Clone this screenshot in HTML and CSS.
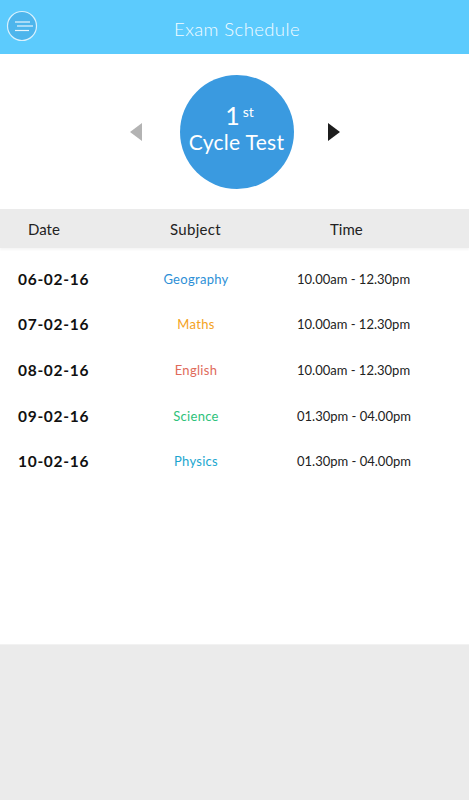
FILE: index.html
```html
<!DOCTYPE html>
<html lang="en">
<head>
  <meta charset="UTF-8" />
  <meta name="viewport" content="width=device-width, initial-scale=1.0" />
  <title>Exam Schedule</title>
  <link rel="stylesheet" href="styles.css">
</head>
<body>
  <header class="topbar">
    <button class="menu-btn" aria-label="Menu">
      <svg width="32" height="32" viewBox="0 0 32 32">
        <circle cx="16" cy="16" r="14.5" fill="#4db5ec" stroke="#d8f1fd" stroke-width="1.2" />
        <line x1="9" y1="12" x2="24" y2="12" stroke="#e6f6fe" stroke-width="1.2" />
        <line x1="11" y1="16" x2="27" y2="16" stroke="#e6f6fe" stroke-width="1.2" />
        <line x1="9" y1="20.5" x2="23" y2="20.5" stroke="#e6f6fe" stroke-width="1.2" />
      </svg>
    </button>
    <h1>Exam Schedule</h1>
  </header>

  <section class="picker">
    <span class="arrow arrow-left"></span>
    <div class="test-circle">
      <div class="test-num">1<sup>st</sup></div>
      <div class="test-name">Cycle Test</div>
    </div>
    <span class="arrow arrow-right"></span>
  </section>

  <div class="table-head">
    <span class="col-date">Date</span>
    <span class="col-subject">Subject</span>
    <span class="col-time">Time</span>
  </div>

  <ul class="rows">
    <li class="row">
      <span class="col-date">06-02-16</span>
      <span class="col-subject geo">Geography</span>
      <span class="col-time">10.00am - 12.30pm</span>
    </li>
    <li class="row">
      <span class="col-date">07-02-16</span>
      <span class="col-subject maths">Maths</span>
      <span class="col-time">10.00am - 12.30pm</span>
    </li>
    <li class="row">
      <span class="col-date">08-02-16</span>
      <span class="col-subject english">English</span>
      <span class="col-time">10.00am - 12.30pm</span>
    </li>
    <li class="row">
      <span class="col-date">09-02-16</span>
      <span class="col-subject science">Science</span>
      <span class="col-time">01.30pm - 04.00pm</span>
    </li>
    <li class="row">
      <span class="col-date">10-02-16</span>
      <span class="col-subject physics">Physics</span>
      <span class="col-time">01.30pm - 04.00pm</span>
    </li>
  </ul>

  <div class="footer-space"></div>
</body>
</html>
```

FILE: styles.css
```css
body {
  margin: 0;
  font-family: Lato, "Open Sans", sans-serif;
  background: #fff;
  color: #111;
  height: 800px;
  display: flex;
  flex-direction: column;
}
.topbar {
  height: 54px;
  background: #5ccbfd;
  display: flex;
  align-items: center;
  position: relative;
  flex-shrink: 0;
}
.menu-btn {
  border: 0;
  background: none;
  padding: 0;
  margin-left: 6px;
  margin-top: -2px;
  width: 32px;
  height: 32px;
  display: flex;
}
.topbar h1 {
  position: absolute;
  left: 0;
  right: 0;
  top: 18px;
  margin: 0;
  text-align: center;
  font-size: 18.5px;
  line-height: 22px;
  font-weight: 300;
  color: #f4fbff;
  letter-spacing: 0.4px;
  padding-left: 5px;
  pointer-events: none;
}
.picker {
  height: 155px;
  display: flex;
  align-items: center;
  justify-content: center;
  flex-shrink: 0;
}
.arrow {
  width: 0;
  height: 0;
  border-top: 9px solid transparent;
  border-bottom: 9px solid transparent;
}
.arrow-left {
  border-right: 12px solid #b3b3b3;
  margin-right: 38px;
}
.arrow-right {
  border-left: 12px solid #1d1d1d;
  margin-left: 34px;
}
.test-circle {
  width: 114px;
  height: 114px;
  border-radius: 50%;
  background: #3a9ae0;
  color: #fff;
  display: flex;
  flex-direction: column;
  align-items: center;
  justify-content: center;
  padding-bottom: 8px;
  box-sizing: border-box;
}
.test-num {
  font-size: 25px;
  font-weight: normal;
  line-height: 26px;
  margin-left: 6px;
}
.test-num sup {
  font-size: 14px;
  margin-left: 3px;
  vertical-align: 8px;
}
.test-name {
  font-size: 21px;
  line-height: 28px;
  letter-spacing: 0.3px;
}
.table-head {
  height: 39px;
  background: #ebebeb;
  display: flex;
  align-items: center;
  font-size: 15px;
  color: #222;
  flex-shrink: 0;
  box-shadow: 0 2px 2px rgba(0, 0, 0, 0.04);
}
.table-head .col-date {
  width: 170px;
  padding-left: 28px;
  box-sizing: border-box;
}
.table-head .col-subject {
  width: 160px;
  letter-spacing: 0.3px;
}
.rows {
  list-style: none;
  margin: 0;
  padding: 8px 0 0;
  flex: 1;
}
.row {
  height: 45.6px;
  display: flex;
  align-items: center;
}
.row .col-date {
  width: 140px;
  padding-left: 18px;
  box-sizing: border-box;
  font-size: 15.5px;
  font-weight: bold;
  letter-spacing: 0.7px;
}
.row .col-subject {
  width: 112px;
  text-align: center;
  font-size: 13px;
  letter-spacing: 0.3px;
}
.row .col-time {
  padding-left: 45px;
  font-size: 13px;
  color: #222;
}
.geo { color: #2d8fd6; }
.maths { color: #f4a21c; }
.english { color: #e06a5a; }
.science { color: #2ec27a; }
.physics { color: #1aa6cf; }
.footer-space {
  height: 155px;
  background: #ebebeb;
  border-top: 1px solid #f2f2f2;
  flex-shrink: 0;
}
```
